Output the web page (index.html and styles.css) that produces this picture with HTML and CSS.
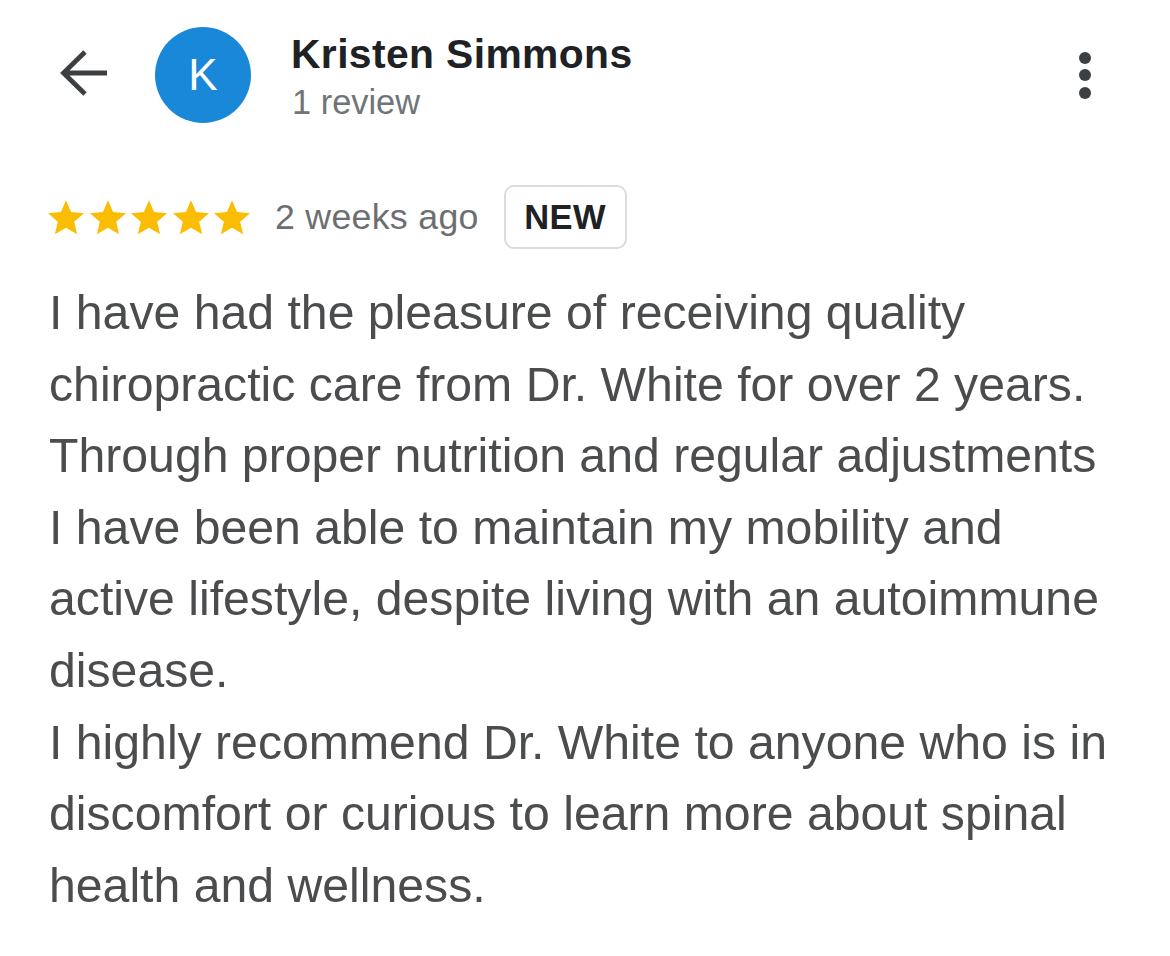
FILE: index.html
```html
<!DOCTYPE html>
<html lang="en">
<head>
<meta charset="utf-8">
<title>Review</title>
<link rel="stylesheet" href="styles.css">
</head>
<body>
<div class="page">
  <header class="header">
    <button class="back" aria-label="Back">
      <svg width="50" height="50" viewBox="0 0 50 50"><path d="M48 23H5M26 2L4.5 23L26 44" fill="none" stroke="#3c4043" stroke-width="4.8" stroke-linecap="butt" stroke-linejoin="miter"/></svg>
    </button>
    <div class="avatar">K</div>
    <div class="who">
      <div class="name">Kristen Simmons</div>
      <div class="count">1 review</div>
    </div>
    <div class="menu" aria-label="More"><span></span><span></span><span></span></div>
  </header>
  <div class="meta">
    <div class="stars">
      <svg viewBox="2 2 20 19.27"><path d="M12 17.27L18.18 21l-1.64-7.03L22 9.24l-7.19-.61L12 2 9.19 8.63 2 9.24l5.46 4.730L5.82 21z"/></svg>
      <svg viewBox="2 2 20 19.27"><path d="M12 17.27L18.18 21l-1.64-7.03L22 9.24l-7.19-.61L12 2 9.19 8.63 2 9.24l5.46 4.730L5.82 21z"/></svg>
      <svg viewBox="2 2 20 19.27"><path d="M12 17.27L18.18 21l-1.64-7.03L22 9.24l-7.19-.61L12 2 9.19 8.63 2 9.24l5.46 4.730L5.82 21z"/></svg>
      <svg viewBox="2 2 20 19.27"><path d="M12 17.27L18.18 21l-1.64-7.03L22 9.24l-7.19-.61L12 2 9.19 8.63 2 9.24l5.46 4.730L5.82 21z"/></svg>
      <svg viewBox="2 2 20 19.27"><path d="M12 17.27L18.18 21l-1.64-7.03L22 9.24l-7.19-.61L12 2 9.19 8.63 2 9.24l5.46 4.730L5.82 21z"/></svg>
    </div>
    <span class="when">2 weeks ago</span>
    <span class="badge">NEW</span>
  </div>
  <p class="text">I have had the pleasure of receiving quality<br>chiropractic care from Dr. White for over 2 years.<br>Through proper nutrition and regular adjustments<br>I have been able to maintain my mobility and<br>active lifestyle, despite living with an autoimmune<br>disease.<br>I highly recommend Dr. White to anyone who is in<br>discomfort or curious to learn more about spinal<br>health and wellness.</p>
</div>
</body>
</html>
```
FILE: styles.css
```css
html, body {
  margin: 0;
  padding: 0;
  background: #ffffff;
}
body {
  font-family: "Liberation Sans", Arial, Helvetica, sans-serif;
  width: 1170px;
  height: 956px;
  overflow: hidden;
}
.page {
  padding: 0 46px;
}
.header {
  display: flex;
  align-items: center;
  padding-top: 27px;
  height: 96px;
}
.back {
  border: 0;
  background: none;
  padding: 0;
  margin-left: 13px;
  width: 50px;
  height: 50px;
  display: flex;
}
.avatar {
  width: 96px;
  height: 96px;
  border-radius: 50%;
  background: #1a88d8;
  color: #ffffff;
  font-size: 44px;
  display: flex;
  align-items: center;
  justify-content: center;
  margin-left: 46px;
  flex-shrink: 0;
}
.who {
  margin-left: 40px;
  display: flex;
  flex-direction: column;
  gap: 5px;
  margin-top: 2px;
}
.name {
  font-size: 40.8px;
  line-height: 46px;
  font-weight: 700;
  color: #202124;
  letter-spacing: 0.4px;
}
.count {
  font-size: 34.4px;
  line-height: 40px;
  color: #70757a;
  margin-left: 1px;
}
.menu {
  margin-left: auto;
  margin-right: 33px;
  display: flex;
  flex-direction: column;
  gap: 5.5px;
  margin-top: 0;
}
.menu span {
  width: 12px;
  height: 12px;
  border-radius: 50%;
  background: #3c4043;
}
.meta {
  display: flex;
  align-items: center;
  margin-top: 62px;
  height: 64px;
}
.stars {
  display: flex;
  gap: 5.5px;
  margin-left: 2px;
}
.stars svg {
  width: 36px;
  height: 35px;
  fill: #fbbc04;
}
.when {
  margin-left: 25px;
  font-size: 35.7px;
  color: #6d6e71;
  letter-spacing: 0.3px;
}
.badge {
  margin-left: 25px;
  box-sizing: border-box;
  width: 123px;
  height: 64px;
  border: 2px solid #dadce0;
  border-radius: 10px;
  display: flex;
  align-items: center;
  justify-content: center;
  font-size: 34.5px;
  font-weight: 700;
  color: #202124;
  letter-spacing: 0.5px;
}
.text {
  margin: 28px 0 0 3px;
  font-size: 48.2px;
  line-height: 71.6px;
  color: #4b4c4e;
  white-space: nowrap;
}
```
